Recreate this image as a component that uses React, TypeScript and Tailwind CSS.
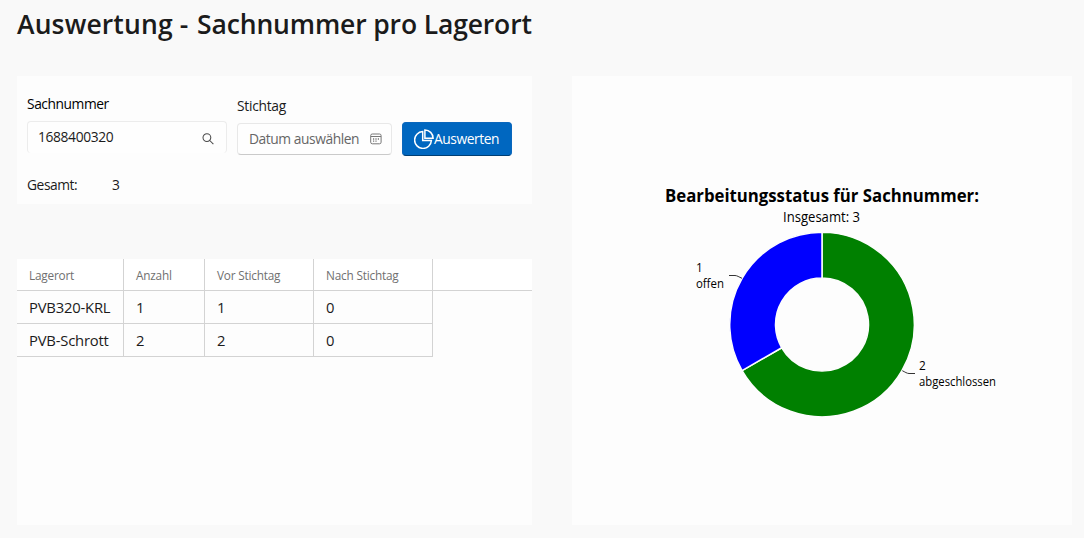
import React from "react";

const rows = [
  { ort: "PVB320-KRL", anzahl: 1, vor: 1, nach: 0 },
  { ort: "PVB-Schrott", anzahl: 2, vor: 2, nach: 0 },
];

const gridCols = "grid grid-cols-[107px_81px_109px_119px]";
const headCell = "flex items-center border-r border-[#d3d3d3] pt-0.5 pl-3";
const bodyCell = "flex items-center border-r border-b border-[#d3d3d3] pl-3";

function SearchIcon() {
  return (
    <svg width="12" height="12" viewBox="0 0 12 12" fill="none" stroke="#4a4a4a" strokeWidth="1.05">
      <circle cx="4.9" cy="4.6" r="3.9" />
      <path d="M7.7 7.5 11.4 11.2" />
    </svg>
  );
}

function CalendarIcon() {
  return (
    <svg width="12" height="12" viewBox="0 0 12 12" fill="none" stroke="#777" strokeWidth="1">
      <rect x="0.7" y="1" width="10.4" height="9.8" rx="1.6" />
      <path d="M1 3.5H11" />
      <path d="M3 6H4.2M5.4 6H6.6M7.8 6H9M3 8.2H4.2M5.4 8.2H6.6" strokeWidth="1.3" />
    </svg>
  );
}

function PieIcon() {
  return (
    <svg width="20" height="20" viewBox="0 0 20 20" fill="none" stroke="#fff" strokeWidth="1.5" strokeLinejoin="miter" className="-mt-px">
      <path d="M8.7 2.6A8.4 8.4 0 1 0 17.4 11.5H8.7Z" />
      <path d="M10.9 0.9A8.4 8.4 0 0 1 19.1 9.2H10.9Z" />
    </svg>
  );
}

function Chart() {
  return (
    <svg width="500" height="449" viewBox="572 76 500 449" className="block tracking-normal" fontFamily="'Open Sans', 'Noto Sans', sans-serif">
      <text x="665" y="202" fontSize="17.5" fontWeight="700" textLength="314" lengthAdjust="spacingAndGlyphs">
        Bearbeitungsstatus für Sachnummer:
      </text>
      <text x="783" y="222" fontSize="13.6" textLength="77" lengthAdjust="spacingAndGlyphs">
        Insgesamt: 3
      </text>
      <g stroke="#fdfdfd" strokeWidth="1.5" strokeLinejoin="round">
        <path fill="green" d="M822 232.2A92.3 92.3 0 1 1 742.07 370.65L781.73 347.75A46.5 46.5 0 1 0 822 278Z" />
        <path fill="blue" d="M742.07 370.65A92.3 92.3 0 0 1 822 232.2V278A46.5 46.5 0 0 0 781.73 347.75Z" />
      </g>
      <g fill="none" stroke="#333" strokeWidth="1">
        <path d="M729 275.5H735C737 275.5 739 277 742 278.3" />
        <path d="M902.3 370.7C905 372 907 373.5 909 373.5H915" />
      </g>
      <g fontSize="11.8">
        <text x="696" y="272">1</text>
        <text x="696" y="288" textLength="28" lengthAdjust="spacingAndGlyphs">offen</text>
        <text x="919" y="370">2</text>
        <text x="919" y="386" textLength="77" lengthAdjust="spacingAndGlyphs">abgeschlossen</text>
      </g>
    </svg>
  );
}

export default function App() {
  return (
    <main className="h-[538px] w-[1084px] overflow-hidden bg-[#f9f9f9] pl-[17px] font-['Open_Sans','Noto_Sans',sans-serif] text-[13.8px] tracking-[-0.44px] text-[#1b1b1b]">
      <h1 className="flex h-[76px] items-start pt-[6px] text-[26.5px] leading-9 font-semibold tracking-normal whitespace-nowrap">
        <span className="w-[180px] tracking-[0.13px]">Auswertung -</span>
        <span className="tracking-[-0.14px]">Sachnummer pro Lagerort</span>
      </h1>
      <div className="flex gap-10">
        <div className="flex w-[515px] flex-col gap-[55px]">
          <section className="h-32 bg-[#fdfdfd] pl-[10px]">
            <div className="flex gap-[10px]">
              <label className="flex w-[200px] flex-col pt-[18px]">
                <span className="h-[27px] leading-5 text-black">Sachnummer</span>
                <span className="flex h-8 items-center justify-between rounded-[4px] border border-b-0 border-[#ececec] bg-[#fefefe] pr-3 pl-[10px]">
                  <span className="tracking-[-0.36px]">1688400320</span>
                  <span className="pt-[3px]"><SearchIcon /></span>
                </span>
              </label>
              <label className="flex w-[155px] flex-col pt-5">
                <span className="h-[27px] leading-5 tracking-[-0.28px]">Stichtag</span>
                <span className="flex h-8 items-center justify-between rounded-[4px] border border-[#e8e8e8] border-b-[#cacaca] bg-[#fefefe] pr-[9px] pl-[11px] text-[#666]">
                  <span className="pt-px">Datum auswählen</span>
                  <CalendarIcon />
                </span>
              </label>
              <button className="mt-[46px] flex h-[34px] w-[110px] items-center rounded-[4px] border border-[#0a67bd] border-b-[#003e73] bg-[#0067c0] pl-[11px] text-white">
                <PieIcon />
                <span className="pt-px">Auswerten</span>
              </button>
            </div>
            <div className="flex pt-[19px] leading-5">
              <span className="w-[85px]">Gesamt:</span>
              <span>3</span>
            </div>
          </section>
          <section className="h-[266px] bg-[#fdfdfd]">
            <div className="h-8 border-b border-[#d3d3d3] bg-white text-[11.8px] tracking-[-0.2px] text-[#707070]">
              <div className={`${gridCols} h-8`}>
                <div className={headCell}>Lagerort</div>
                <div className={headCell}>Anzahl</div>
                <div className={headCell}>Vor Stichtag</div>
                <div className={headCell}>Nach Stichtag</div>
              </div>
            </div>
            {rows.map((r) => (
              <div key={r.ort} className={`${gridCols} h-[33px] text-[14.8px] tracking-[-0.2px]`}>
                <div className={bodyCell}>{r.ort}</div>
                <div className={bodyCell}>{r.anzahl}</div>
                <div className={bodyCell}>{r.vor}</div>
                <div className={bodyCell}>{r.nach}</div>
              </div>
            ))}
          </section>
        </div>
        <section className="h-[449px] w-[500px] bg-[#fdfdfd]">
          <Chart />
        </section>
      </div>
    </main>
  );
}
